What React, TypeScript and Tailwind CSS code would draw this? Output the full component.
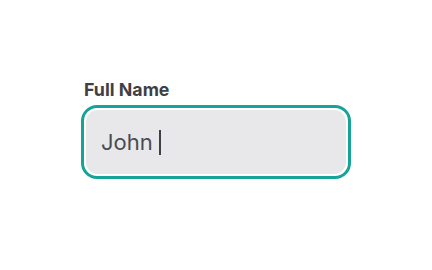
import React from "react";

export default function App() {
  return (
    <div className="flex h-[270px] w-[432px] flex-col items-center bg-white pt-[79px] font-['Inter','Inter_Variable','Inter_Display','Noto_Sans',sans-serif]">
      <div className="flex w-[270px] flex-col gap-[4px]">
        <label className="pl-[3px] text-[17.8px] font-bold leading-[22px] text-[#3f3f46]">Full Name</label>
        <div className="h-[74px] w-[270px] rounded-[16px] border-[3px] border-[#15a39a] bg-white p-[2px]">
          <div className="flex h-full items-center rounded-[12px] bg-[#e8e8ea] pl-[15px]">
            <span className="text-[22px] leading-[26px] text-[#4b4b52]">John</span>
            <span className="ml-[6px] h-[25px] w-[2px] bg-[#3f3f46]" />
          </div>
        </div>
      </div>
    </div>
  );
}
